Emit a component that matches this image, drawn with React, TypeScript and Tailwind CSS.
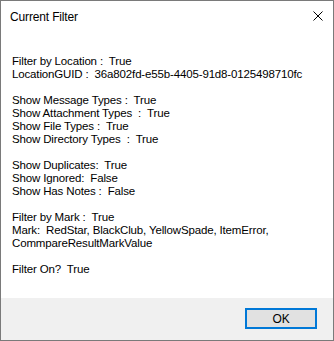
const lines = [
  'Filter by Location :  True',
  'LocationGUID :  36a802fd-e55b-4405-91d8-0125498710fc',
  '',
  'Show Message Types :  True',
  'Show Attachment Types  :  True',
  'Show File Types :  True',
  'Show Directory Types  :  True',
  '',
  'Show Duplicates:  True',
  'Show Ignored:  False',
  'Show Has Notes :  False',
  '',
  'Filter by Mark :  True',
  'Mark:  RedStar, BlackClub, YellowSpade, ItemError,',
  'CommpareResultMarkValue',
  '',
  'Filter On?  True',
]

function App() {
  return (
    <div
      className="w-[334px] h-[341px] border border-[#7a7a7a] bg-white flex flex-col text-black tracking-[-0.15px]"
      style={{ fontFamily: '"Liberation Sans", Arial, sans-serif' }}
    >
      <div className="h-[31px] flex items-center justify-between pl-[9px] pr-[10px] shrink-0">
        <span className="text-[12px]">Current Filter</span>
        <svg width="10" height="10" viewBox="0 0 10 10" className="mt-[-1px]">
          <path d="M0.5 0.5 L9.5 9.5 M9.5 0.5 L0.5 9.5" stroke="#000" strokeWidth="1" />
        </svg>
      </div>
      <div className="flex-1 pt-[23px] pl-[11px] text-[11.5px]">
        {lines.map((l, i) => (
          <div key={i} className="h-[13px] leading-[13px] whitespace-pre">
            {l}
          </div>
        ))}
      </div>
      <div className="h-[42px] shrink-0 bg-[#f0f0f0] flex justify-end items-start pt-[10px] pr-[16px]">
        <button
          type="button"
          className="w-[72px] h-[21px] border-2 border-[#0078d7] bg-[#e1e1e1] text-[12px] leading-none"
        >
          OK
        </button>
      </div>
    </div>
  )
}

export default App
